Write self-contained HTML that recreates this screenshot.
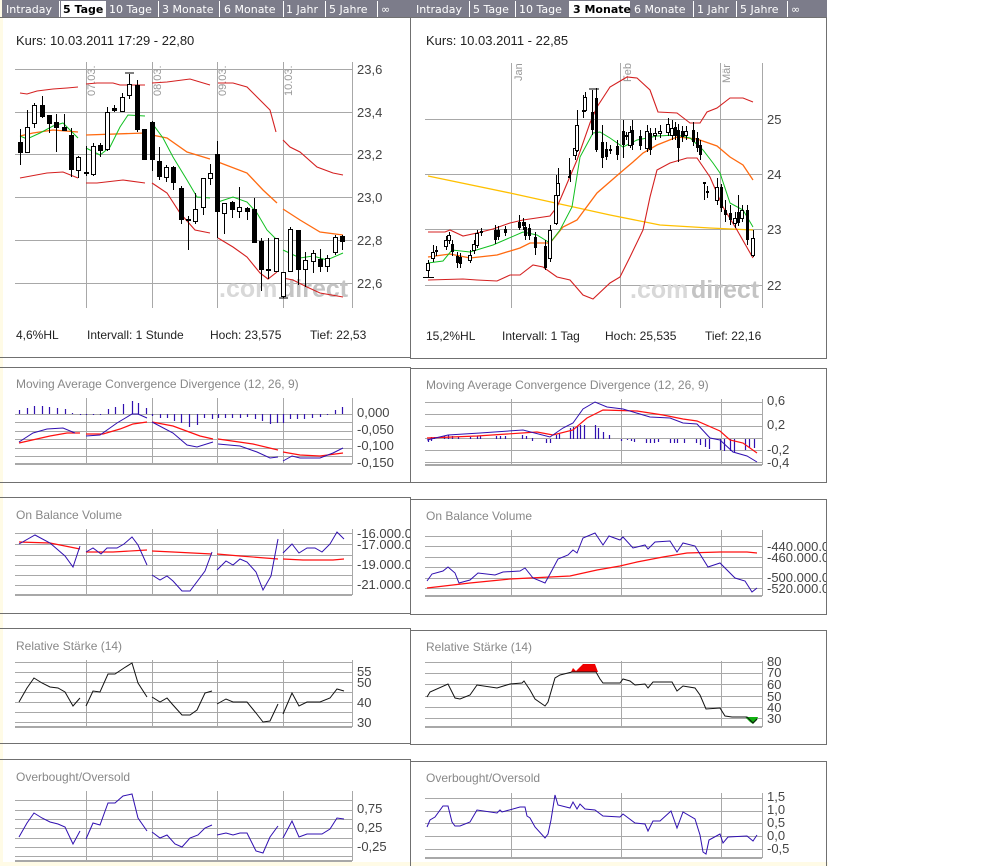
<!DOCTYPE html>
<html><head><meta charset="utf-8"><style>
html,body{margin:0;padding:0;background:#fff;width:1008px;height:866px;overflow:hidden}
svg{display:block}
text{font-family:"Liberation Sans",sans-serif}
.t{font-family:"DejaVu Sans",sans-serif;font-size:11px;fill:#fff}
.ts{font-family:"DejaVu Sans",sans-serif;font-size:11px;font-weight:bold;fill:#000}
.ax{font-size:13px;fill:#444}
.ti{font-size:12px;fill:#888}
.k{font-size:12px;fill:#222}
.kk{font-size:13px;fill:#222}
.g{stroke:#a8a8a8;stroke-width:1;fill:none}
.gb{stroke:#a8a8a8;stroke-width:2;fill:none}
.pb{fill:none;stroke:#707070;stroke-width:1}
.r{fill:none;stroke:#d42020;stroke-width:1.1}
.o{fill:none;stroke:#ff6a10;stroke-width:1.3}
.gr{fill:none;stroke:#10c020;stroke-width:1}
.y{fill:none;stroke:#ffc000;stroke-width:1.3}
.bl{fill:none;stroke:#3010b0;stroke-width:1}
.rd{fill:none;stroke:#ff1010;stroke-width:1.2}
.bk{fill:none;stroke:#111;stroke-width:1}
.dl{font-size:11px;fill:#999}
.wm{font-size:25px;font-weight:bold;fill:#d8d8d8}
.wm2{font-size:25px;font-weight:bold;fill:#c4c4c4}
</style></head><body>
<svg width="1008" height="866" xmlns="http://www.w3.org/2000/svg">
<rect x="0" y="0" width="3" height="866" fill="#fffbe6"/>
<rect x="0" y="862" width="828" height="4" fill="#fffbe6"/>

<rect x="2" y="0" width="408" height="18" fill="#7c7c8a"/>
<g stroke="#fff" stroke-width="1">
<line x1="59.5" y1="1" x2="59.5" y2="18"/><line x1="105.5" y1="1" x2="105.5" y2="18"/><line x1="158.5" y1="1" x2="158.5" y2="18"/><line x1="219.5" y1="1" x2="219.5" y2="18"/><line x1="283.5" y1="1" x2="283.5" y2="18"/><line x1="325.5" y1="1" x2="325.5" y2="18"/><line x1="377.5" y1="1" x2="377.5" y2="18"/>
</g>
<rect x="61" y="1" width="44" height="18" fill="#fff"/>
<text class="t" x="6" y="13">Intraday</text><text class="ts" x="63" y="13">5 Tage</text><text class="t" x="109" y="13">10 Tage</text><text class="t" x="162" y="13">3 Monate</text><text class="t" x="224" y="13">6 Monate</text><text class="t" x="286" y="13">1 Jahr</text><text class="t" x="329" y="13">5 Jahre</text><text class="t" x="381" y="13">∞</text>
<rect x="410" y="0" width="417" height="18" fill="#7c7c8a"/>
<g stroke="#fff" stroke-width="1">
<line x1="469.5" y1="1" x2="469.5" y2="18"/><line x1="515.5" y1="1" x2="515.5" y2="18"/><line x1="569.5" y1="1" x2="569.5" y2="18"/><line x1="629.5" y1="1" x2="629.5" y2="18"/><line x1="693.5" y1="1" x2="693.5" y2="18"/><line x1="736.5" y1="1" x2="736.5" y2="18"/><line x1="787.5" y1="1" x2="787.5" y2="18"/>
</g>
<rect x="570" y="1" width="59" height="18" fill="#fff"/>
<text class="t" x="416" y="13">Intraday</text><text class="t" x="473" y="13">5 Tage</text><text class="t" x="519" y="13">10 Tage</text><text class="ts" x="573" y="13">3 Monate</text><text class="t" x="634" y="13">6 Monate</text><text class="t" x="697" y="13">1 Jahr</text><text class="t" x="740" y="13">5 Jahre</text><text class="t" x="791" y="13">∞</text>

<g class="pb">
<path d="M0 17.5H410.5V357.5H0"/>
<path d="M0 367.5H410.5V482.5H0"/>
<path d="M0 497.5H410.5V613.5H0"/>
<path d="M0 628.5H410.5V743.5H0"/>
<path d="M0 759.5H410.5V866"/>
<rect x="410.5" y="17.5" width="416" height="341"/>
<rect x="410.5" y="368.5" width="416" height="114"/>
<rect x="410.5" y="499.5" width="416" height="115"/>
<rect x="410.5" y="630.5" width="416" height="114"/>
<path d="M410.5 866V761.5H826.5V866"/>
</g>

<svg x="0" y="0" width="410" height="866">
<text class="kk" x="16" y="45">Kurs: 10.03.2011 17:29 - 22,80</text>
<g class="g">
<path d="M15 69.5H352M15 112.5H352M15 154.5H352M15 197.5H352M15 240.5H352M15 283.5H352"/>
<path d="M86.5 62V308M152.5 62V308M217.5 62V308M283.5 62V308M352.5 62V308"/>
</g>
<text class="wm" x="219" y="297">.com</text><text class="wm2" x="280" y="297">direct</text>
<g class="dl">
<text transform="translate(95,96) rotate(-90)">07.03.</text>
<text transform="translate(161,96) rotate(-90)">08.03.</text>
<text transform="translate(226,96) rotate(-90)">09.03.</text>
<text transform="translate(292,96) rotate(-90)">10.03.</text>
</g>
<g class="ax"><text x="357" y="74">23,6</text><text x="357" y="117">23,4</text><text x="357" y="159">23,2</text><text x="357" y="202">23,0</text><text x="357" y="245">22,8</text><text x="357" y="288">22,6</text></g>
<g class="r">
<polyline points="20,93 27,94 37,91 53,89 67,88 78,87"/>
<polyline points="86,84 97,83 113,83 120,85 145,85"/>
<polyline points="152,83 167,82 190,79 210,85"/>
<polyline points="218,83 233,83 247,87 257,97 270,110 276,132"/>
<polyline points="283,140 290,147 300,152 317,167 333,173 343,175"/>
<polyline points="20,178 47,173 63,172 78,178"/>
<polyline points="86,183 97,183 123,180 145,183"/>
<polyline points="152,183 167,193 180,213 195,230 210,233"/>
<polyline points="218,238 233,247 247,257 260,273 268,279 277,272"/>
<polyline points="283,278 293,280 307,287 320,293 343,297"/>
</g>
<g class="o">
<polyline points="20,136 33,133 53,130 78,132"/>
<polyline points="86,135 145,133"/>
<polyline points="152,135 167,138 187,152 210,159"/>
<polyline points="218,162 247,173 263,190 277,203"/>
<polyline points="283,209 300,220 320,232 343,235"/>
</g>
<g class="gr">
<polyline points="20,136 27,139 40,133 53,126 63,123 78,138"/>
<polyline points="86,148 100,155 110,147 120,127 128,115 145,116"/>
<polyline points="152,123 163,138 173,157 187,180 197,197 210,198"/>
<polyline points="218,202 233,197 247,202 257,213 267,230 277,240"/>
<polyline points="283,250 300,258 313,256 327,260 343,253"/>
</g>
<g stroke="#000" stroke-width="1">
<path d="M20.5 129V165M27.5 110V153M34.5 103V128M42.5 96V118M49.5 115V133M56.5 114V152M64.5 114V131M71.5 128V177M78.5 156V178M86.5 146V176M93.5 143V176M100.5 143V157M107.5 107V151M114.5 105V112M122.5 93V111M129.5 74V99M137.5 80V132M144.5 129V160M152.5 121V171M159.5 147V180M166.5 165V182M173.5 166V190M181.5 186V224M188.5 216V250M195.5 193V224M203.5 178V215M210.5 164V185M217.5 141V238M224.5 203V234M232.5 201V218M239.5 187V218M247.5 207V220M254.5 198V243M261.5 238V291M268.5 238V279M276.5 238V272M283.5 272V298M290.5 227V272M298.5 230V285M305.5 252V287M313.5 250V273M320.5 249V272M327.5 255V272M335.5 235V255M342.5 235V250M125 73H134M279 298H288"/>
</g>
<g fill="#000">
<rect x="18" y="142" width="5" height="11"/><rect x="40" y="105" width="5" height="12"/><rect x="47" y="115" width="5" height="9"/><rect x="54" y="122" width="5" height="6"/><rect x="62" y="127" width="5" height="4"/><rect x="69" y="135" width="5" height="35"/><rect x="84" y="172" width="5" height="2"/><rect x="98" y="145" width="5" height="6"/><rect x="112" y="108" width="5" height="3"/><rect x="135" y="85" width="5" height="45"/><rect x="142" y="129" width="5" height="31"/><rect x="150" y="122" width="5" height="38"/><rect x="157" y="161" width="5" height="16"/><rect x="171" y="167" width="5" height="16"/><rect x="179" y="188" width="5" height="32"/><rect x="186" y="219" width="5" height="2"/><rect x="215" y="154" width="5" height="58"/><rect x="230" y="202" width="5" height="8"/><rect x="245" y="208" width="5" height="4"/><rect x="252" y="209" width="5" height="34"/><rect x="259" y="241" width="5" height="29"/><rect x="266" y="269" width="5" height="2"/><rect x="296" y="230" width="5" height="40"/><rect x="318" y="259" width="5" height="8"/><rect x="340" y="236" width="5" height="6"/>
</g>
<g fill="#fff" stroke="#000" stroke-width="1">
<rect x="25.5" y="127.5" width="4" height="25"/><rect x="32.5" y="105.5" width="4" height="18"/><rect x="76.5" y="157.5" width="4" height="13"/><rect x="91.5" y="146.5" width="4" height="28"/><rect x="105.5" y="112.5" width="4" height="37"/><rect x="120.5" y="97.5" width="4" height="14"/><rect x="127.5" y="84.5" width="4" height="11"/><rect x="164.5" y="167.5" width="4" height="10"/><rect x="193.5" y="209.5" width="4" height="12"/><rect x="201.5" y="178.5" width="4" height="29"/><rect x="208.5" y="173.5" width="4" height="5"/><rect x="222.5" y="203.5" width="4" height="10"/><rect x="237.5" y="207.5" width="4" height="4"/><rect x="274.5" y="238.5" width="4" height="33"/><rect x="281.5" y="272.5" width="4" height="24"/><rect x="288.5" y="229.5" width="4" height="42"/><rect x="303.5" y="260.5" width="4" height="9"/><rect x="311.5" y="253.5" width="4" height="8"/><rect x="325.5" y="258.5" width="4" height="8"/><rect x="333.5" y="237.5" width="4" height="15"/>
</g>
<g class="k"><text x="16" y="339">4,6%HL</text><text x="87" y="339">Intervall: 1 Stunde</text><text x="210" y="339">Hoch:  23,575</text><text x="310" y="339">Tief:   22,53</text></g>

<text class="ti" x="16" y="388">Moving Average Convergence Divergence (12, 26, 9)</text>
<g class="g"><path d="M15 414.5H352M15 422.5H352M15 431.5H352M15 439.5H352M15 448.5H352M15 456.5H352"/><path d="M86.5 398V464M152.5 398V464M217.5 398V464M283.5 398V464M352.5 398V464"/></g>
<path class="gb" d="M15 464H352"/>
<g stroke="#3010b0" stroke-width="1.2">
<path d="M19.5 410V414M27.5 408V414M34.5 406V414M42.5 406V414M49.5 407V414M57.5 408V414M65.5 409V414M72.5 413V414M80.5 414V415M86.5 414V415M93.5 414V415M100.5 414V415M108.5 409V414M115.5 407V414M123.5 404V414M132.5 401V414M138.5 403V414M146.5 408V414M152.5 414V416M160.5 414V418M167.5 414V418M174.5 414V421M181.5 414V423M189.5 414V427M197.5 414V425M204.5 414V418M212.5 414V419M218.5 414V418M225.5 414V418M232.5 414V418M240.5 414V418M247.5 414V417M255.5 414V419M262.5 414V421M270.5 414V424M277.5 414V423M283.5 414V423M290.5 414V419M297.5 414V419M304.5 414V419M312.5 414V418M320.5 414V417M327.5 414V415M335.5 410V414M342.5 407V414"/>
</g>
<g class="rd"><polyline points="19,443 50,436 67,433 80,433"/><polyline points="86,434 103,434 120,429 133,424 147,422"/><polyline points="152,422 173,426 200,436 213,439"/><polyline points="218,439 253,444 278,450"/><polyline points="283,452 300,455 320,456 343,453"/></g>
<g class="bl"><polyline points="19,442 33,433 47,429 63,428 75,433"/><polyline points="86,436 100,435 117,423 132,414 138,414 147,418"/><polyline points="152,422 173,433 187,445 197,447 213,442"/><polyline points="218,444 240,446 257,452 270,458 278,457"/><polyline points="283,461 292,456 300,458 320,458 333,453 343,448"/></g>
<g class="ax"><text x="357" y="417">0,000</text><text x="357" y="434">-0,050</text><text x="357" y="450">-0,100</text><text x="357" y="467">-0,150</text></g>

<text class="ti" x="16" y="519">On Balance Volume</text>
<g class="g"><path d="M15 533.5H352M15 544.5H352M15 555.5H352M15 565.5H352M15 575.5H352M15 585.5H352"/><path d="M86.5 529V595M152.5 529V595M217.5 529V595M283.5 529V595M352.5 529V595"/></g>
<path class="gb" d="M15 595H352"/>
<g class="rd"><polyline points="19,542 50,543 80,549"/><polyline points="86,552 113,552 147,550"/><polyline points="152,551 173,552 212,554"/><polyline points="217,554 240,556 278,559"/><polyline points="283,559 303,560 333,560 344,559"/></g>
<g class="bl"><polyline points="19,544 35,535 50,543 65,556 73,567 80,546"/><polyline points="86,552 93,548 101,554 107,548 117,548 124,544 132,537 138,545 147,565"/><polyline points="152,575 160,580 167,576 173,581 182,591 190,591 205,571 212,552"/><polyline points="217,570 226,561 233,565 240,559 247,562 256,572 263,590 271,576 278,539"/><polyline points="283,553 292,544 299,553 307,548 315,548 322,552 330,544 337,532 344,539"/></g>
<g class="ax"><text x="357" y="538">-16.000.000</text><text x="357" y="549">-17.000.000</text><text x="357" y="569">-19.000.000</text><text x="357" y="589">-21.000.000</text></g>

<text class="ti" x="16" y="650">Relative Stärke (14)</text>
<g class="g"><path d="M15 662.5H352M15 672.5H352M15 682.5H352M15 692.5H352M15 702.5H352M15 712.5H352M15 722.5H352"/><path d="M86.5 660V727M152.5 660V727M217.5 660V727M283.5 660V727M352.5 660V727"/></g>
<path class="gb" d="M15 727H352"/>
<g class="bk"><polyline points="19,702 27,688 34,678 42,683 50,687 58,688 65,692 73,706 80,698"/><polyline points="86,706 93,691 100,692 108,674 115,674 124,668 132,663 138,683 147,697"/><polyline points="152,697 160,702 167,698 173,705 182,715 190,715 197,710 205,693 212,691"/><polyline points="217,704 226,699 233,702 240,702 247,702 256,713 263,722 270,721 278,704"/><polyline points="283,714 292,693 299,706 307,702 320,702 330,698 337,689 344,691"/></g>
<g class="ax"><text x="357" y="676">55</text><text x="357" y="687">50</text><text x="357" y="707">40</text><text x="357" y="727">30</text></g>

<text class="ti" x="16" y="781">Overbought/Oversold</text>
<g class="g"><path d="M15 800.5H352M15 810.5H352M15 819.5H352M15 828.5H352M15 838.5H352M15 847.5H352M15 856.5H352"/><path d="M86.5 791V861M152.5 791V861M217.5 791V861M283.5 791V861M352.5 791V861"/></g>
<path class="gb" d="M15 861H352"/>
<g class="bl"><polyline points="19,837 27,823 34,813 42,818 50,822 58,824 65,827 73,844 80,831"/><polyline points="86,839 93,823 100,825 108,803 115,803 123,796 132,794 138,818 147,831"/><polyline points="152,832 160,838 167,835 175,844 182,847 190,838 198,835 205,828 212,825"/><polyline points="217,835 226,833 233,835 240,833 247,833 256,851 263,853 270,837 278,826"/><polyline points="283,838 292,821 299,837 307,834 322,834 330,829 337,818 344,819"/></g>
<g class="ax"><text x="357" y="813">0,75</text><text x="357" y="832">0,25</text><text x="357" y="851">-0,25</text></g>
</svg>

<svg x="0" y="0" width="826" height="866">
<text class="kk" x="426" y="45">Kurs: 10.03.2011 - 22,85</text>
<g class="g">
<path d="M425 119.5H762M425 174.5H762M425 229.5H762M425 285.5H762"/>
<path d="M511.5 63V308M620.5 63V308M720.5 63V308M762.5 63V308"/>
</g>
<text class="wm" x="630" y="298">.com</text><text class="wm2" x="691" y="298">direct</text>
<g class="dl">
<text transform="translate(522,81) rotate(-90)">Jan</text>
<text transform="translate(631,82) rotate(-90)">Feb</text>
<text transform="translate(730,83) rotate(-90)">Mär</text>
</g>
<g class="ax"><text x="767" y="124">25</text><text x="767" y="179">24</text><text x="767" y="234">23</text><text x="767" y="290">22</text></g>
<polyline class="y" points="428,176 510,193 560,204 610,215 660,225 710,228 753,230"/>
<polyline class="r" points="428,232 445,232 450,230 463,236 477,233 493,229 510,223 523,220 550,216 557,207 563,193 577,160 590,123 597,107 610,87 627,77 637,78 650,90 658,112 677,113 690,123 700,123 707,112 717,108 730,98 743,98 753,102"/>
<polyline class="r" points="428,280 463,279 477,280 497,281 510,275 520,275 533,265 543,267 557,277 570,280 583,295 593,299 610,283 620,277 630,257 643,230 650,197 657,170 670,163 687,158 697,158 710,177 723,207 737,230 753,258"/>
<polyline class="o" points="428,257 450,254 470,258 497,255 520,248 530,243 550,243 563,227 577,220 597,193 620,173 633,162 643,153 657,145 677,137 697,139 717,146 730,157 743,165 753,180"/>
<polyline class="gr" points="428,263 443,261 452,250 470,252 493,245 523,232 537,235 550,243 560,230 572,207 580,157 593,133 600,132 610,138 623,147 637,140 657,136 677,135 690,138 703,150 713,163 720,173 730,203 743,210 753,227"/>
<g stroke="#000" stroke-width="1">
<path d="M428.5 260V277M423 277.5H434M433.5 245V262M436.5 246V256M446.5 236V250M449.5 232V244M452.5 240V256M457.5 252V268M460.5 253V268M470.5 250V263M474.5 240V254M477.5 230V248M481.5 228V236M495.5 225V244M498.5 226V240M505.5 226V236M519.5 215V230M523.5 218V230M525.5 222V240M529.5 224V240M535.5 232V255M545.5 240V270M550.5 225V262M556.5 175V225M558.5 168V188M569.5 158V178M570.5 170V182M575.5 140V160M577.5 110V152M583.5 95V118M585.5 92V112M592.5 90V135M596.5 88V152M602.5 125V168M606.5 142V160M610.5 145V154M617.5 140V160M623.5 120V158M626.5 132V140M630.5 126V148M632.5 120V150M640.5 130V150M647.5 125V152M650.5 128V155M655.5 128V140M660.5 125V138M668.5 118V136M672.5 120V140M675.5 122V140M678.5 124V162M682.5 126V142M686.5 126V140M693.5 122V146M697.5 132V152M700.5 140V160M704.5 182V200M707.5 186V198M717.5 178V205M721.5 184V212M725.5 200V222M730.5 205V225M735.5 212V228M738.5 195V226M742.5 205V222M747.5 205V245M753.5 230V257M589 89H599"/>
</g>
<g fill="#000">
<rect x="435" y="250" width="3" height="2"/><rect x="451" y="244" width="3" height="8"/><rect x="456" y="256" width="3" height="7"/><rect x="459" y="257" width="3" height="7"/><rect x="480" y="231" width="3" height="2"/><rect x="494" y="230" width="3" height="10"/><rect x="497" y="230" width="3" height="7"/><rect x="504" y="229" width="3" height="4"/><rect x="518" y="222" width="3" height="6"/><rect x="522" y="222" width="3" height="4"/><rect x="524" y="227" width="3" height="9"/><rect x="528" y="228" width="3" height="8"/><rect x="534" y="237" width="3" height="11"/><rect x="544" y="246" width="3" height="22"/><rect x="568" y="176" width="3" height="2"/><rect x="582" y="110" width="3" height="2"/><rect x="591" y="112" width="3" height="18"/><rect x="595" y="98" width="3" height="52"/><rect x="601" y="142" width="3" height="16"/><rect x="605" y="149" width="3" height="8"/><rect x="609" y="149" width="3" height="2"/><rect x="616" y="146" width="3" height="9"/><rect x="622" y="131" width="3" height="14"/><rect x="625" y="135" width="3" height="2"/><rect x="631" y="130" width="3" height="15"/><rect x="639" y="136" width="3" height="10"/><rect x="649" y="133" width="3" height="17"/><rect x="674" y="127" width="3" height="9"/><rect x="677" y="130" width="3" height="18"/><rect x="681" y="131" width="3" height="6"/><rect x="692" y="130" width="3" height="12"/><rect x="696" y="138" width="3" height="10"/><rect x="699" y="145" width="3" height="10"/><rect x="703" y="182" width="3" height="2"/><rect x="706" y="191" width="3" height="2"/><rect x="720" y="187" width="3" height="21"/><rect x="724" y="210" width="3" height="5"/><rect x="729" y="213" width="3" height="7"/><rect x="737" y="212" width="3" height="11"/><rect x="746" y="210" width="3" height="30"/>
</g>
<g fill="#fff" stroke="#000" stroke-width="1">
<rect x="426.5" y="263.5" width="3" height="7"/><rect x="431.5" y="252.5" width="3" height="6"/><rect x="444.5" y="240.5" width="3" height="6"/><rect x="447.5" y="235.5" width="3" height="5"/><rect x="468.5" y="255.5" width="3" height="5"/><rect x="472.5" y="244.5" width="3" height="6"/><rect x="475.5" y="233.5" width="3" height="12"/><rect x="548.5" y="230.5" width="3" height="28"/><rect x="554.5" y="195.5" width="3" height="28"/><rect x="556.5" y="183.5" width="3" height="12"/><rect x="573.5" y="148.5" width="3" height="7"/><rect x="575.5" y="125.5" width="3" height="25"/><rect x="583.5" y="97.5" width="3" height="13"/><rect x="628.5" y="132.5" width="3" height="13"/><rect x="645.5" y="131.5" width="3" height="17"/><rect x="653.5" y="133.5" width="3" height="2"/><rect x="658.5" y="131.5" width="3" height="2"/><rect x="666.5" y="124.5" width="3" height="8"/><rect x="670.5" y="128.5" width="3" height="7"/><rect x="684.5" y="131.5" width="3" height="4"/><rect x="715.5" y="187.5" width="3" height="13"/><rect x="733.5" y="218.5" width="3" height="5"/><rect x="740.5" y="210.5" width="3" height="8"/><rect x="751.5" y="238.5" width="3" height="17"/>
</g>
<g class="k"><text x="426" y="340">15,2%HL</text><text x="502" y="340">Intervall: 1 Tag</text><text x="605" y="340">Hoch:  25,535</text><text x="705" y="340">Tief:   22,16</text></g>

<text class="ti" x="426" y="389">Moving Average Convergence Divergence (12, 26, 9)</text>
<g class="g"><path d="M425 402.5H762M425 414.5H762M425 426.5H762M425 438.5H762M425 450.5H762M425 462.5H762"/><path d="M511.5 399V465M621.5 399V465M721.5 399V465M762.5 399V465"/></g>
<path class="gb" d="M425 465H762"/>
<g stroke="#3010b0" stroke-width="1.2">
<path d="M428.5 439V442M431.5 437V441M434.5 437V439M444.5 436V439M448.5 435V439M452.5 436V439M458.5 437V439M470.5 437V439M477.5 436V439M480.5 436V439M496.5 436V439M500.5 436V439M505.5 436V439M522.5 435V439M526.5 436V439M532.5 438V441M546.5 439V443M550.5 439V443M556.5 435V439M559.5 434V439M570.5 428V439M573.5 427V439M577.5 426V439M580.5 425V439M584.5 425V439M595.5 425V439M598.5 428V439M603.5 432V439M609.5 435V439M621.5 439V441M627.5 439V440M631.5 439V441M634.5 439V442M646.5 439V443M650.5 439V443M654.5 439V443M658.5 439V442M670.5 439V443M674.5 439V443M677.5 439V443M684.5 439V443M696.5 439V443M700.5 439V445M705.5 439V447M709.5 439V449M720.5 439V450M724.5 439V451M730.5 439V451M734.5 439V452M745.5 439V450M749.5 439V448M754.5 439V448"/>
</g>
<polyline class="rd" points="427,438 477,436 537,432 553,435 573,430 587,418 603,410 637,411 663,415 683,419 697,421 720,431 730,440 743,443 757,453"/>
<polyline class="bl" points="427,440 448,435 480,433 523,430 550,437 563,428 573,423 583,409 595,402 607,407 623,409 650,417 670,418 683,423 697,424 710,438 720,440 733,452 747,456 757,462"/>
<g class="ax"><text x="767" y="405">0,6</text><text x="767" y="429">0,2</text><text x="767" y="454">-0,2</text><text x="767" y="467">-0,4</text></g>

<text class="ti" x="426" y="520">On Balance Volume</text>
<g class="g"><path d="M425 536.5H762M425 546.5H762M425 557.5H762M425 567.5H762M425 578.5H762M425 588.5H762"/><path d="M511.5 530V596M621.5 530V596M721.5 530V596M762.5 530V596"/></g>
<path class="gb" d="M425 596H762"/>
<polyline class="rd" points="427,588 470,583 510,579 550,577 570,576 597,570 620,566 637,562 663,557 687,553 720,552 747,552 757,553"/>
<polyline class="bl" points="427,581 432,574 443,571 448,567 455,573 459,583 470,580 478,573 495,575 503,572 520,571 525,568 533,578 545,583 550,574 558,559 568,555 573,550 577,553 583,538 595,533 603,545 609,536 620,540 623,537 633,548 645,545 648,549 655,542 670,541 677,552 683,543 695,546 708,567 720,563 735,578 745,581 752,592 757,588"/>
<g class="ax"><text x="767" y="551">-440.000.000</text><text x="767" y="562">-460.000.000</text><text x="767" y="582">-500.000.000</text><text x="767" y="593">-520.000.000</text></g>

<text class="ti" x="426" y="651">Relative Stärke (14)</text>
<g class="g"><path d="M425 662.5H762M425 673.5H762M425 684.5H762M425 696.5H762M425 707.5H762M425 718.5H762"/><path d="M511.5 661V727M621.5 661V727M721.5 661V727M762.5 661V727"/></g>
<path class="gb" d="M425 727H762"/>
<polygon points="571,672 573,668 576,671 580,667 583,664 595,664 598,672" fill="#ee0000"/>
<polygon points="745,717 750,722 753,724 757,720 758,717" fill="#10b010"/>
<polyline class="bk" points="427,697 430,692 448,684 455,698 460,699 470,695 477,685 497,688 510,684 522,683 524,681 530,690 535,699 545,706 548,702 555,678 560,675 572,672 596,672 600,679 603,683 620,683 623,679 630,681 635,685 645,684 648,688 653,682 672,682 677,691 683,686 695,688 700,695 706,709 720,708 725,716 732,717 747,717 753,723 757,719"/>
<g class="ax"><text x="767" y="666">80</text><text x="767" y="677">70</text><text x="767" y="689">60</text><text x="767" y="701">50</text><text x="767" y="712">40</text><text x="767" y="723">30</text></g>

<text class="ti" x="426" y="782">Overbought/Oversold</text>
<g class="g"><path d="M425 798.5H762M425 811.5H762M425 823.5H762M425 836.5H762M425 849.5H762"/><path d="M511.5 793V858M621.5 793V858M721.5 793V858M762.5 793V858"/></g>
<path class="gb" d="M425 858H762"/>
<polyline class="bl" points="427,827 430,820 435,817 443,806 448,806 452,822 455,826 460,826 470,822 477,810 497,813 500,810 502,812 520,807 525,807 527,816 530,818 535,827 545,838 548,834 551,820 555,795 558,805 570,808 573,802 577,809 580,804 585,809 595,810 603,816 620,817 623,814 635,823 645,824 648,831 653,821 660,821 671,811 677,828 683,812 695,819 700,835 703,852 706,854 709,840 720,834 723,843 728,837 747,836 753,841 757,835"/>
<g class="ax"><text x="767" y="801">1,5</text><text x="767" y="814">1,0</text><text x="767" y="827">0,5</text><text x="767" y="840">0,0</text><text x="767" y="853">-0,5</text></g>
</svg>
</svg>
</body></html>
